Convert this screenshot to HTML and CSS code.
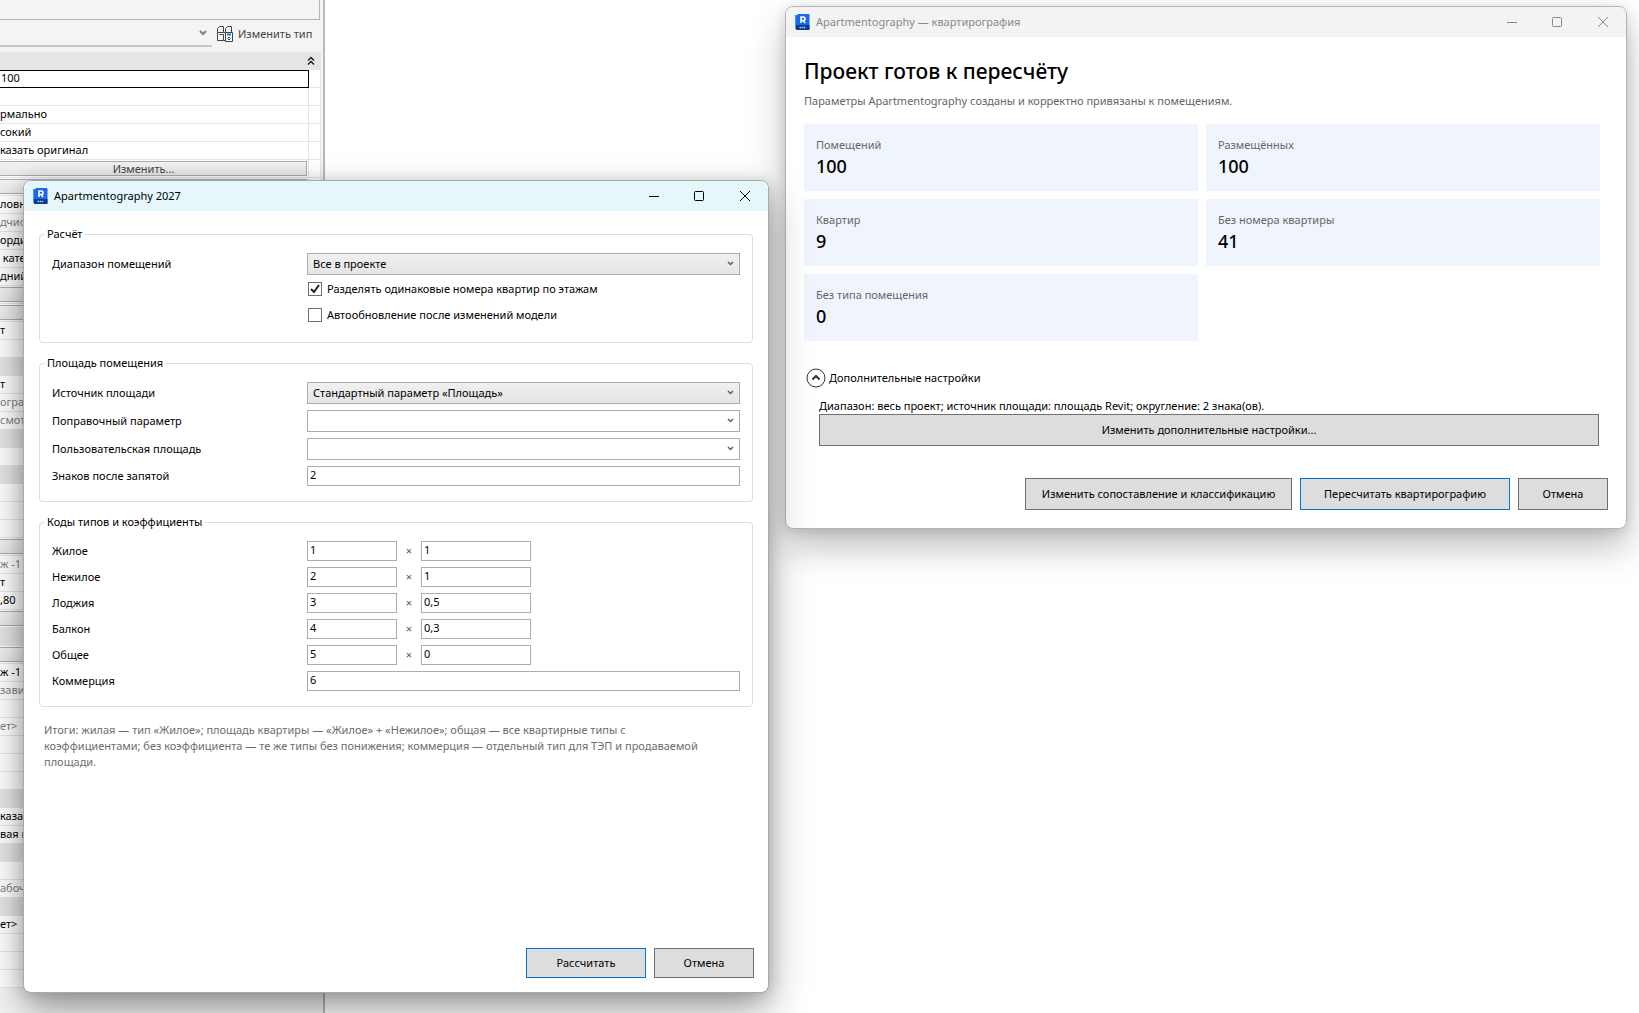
FILE: index.html
```
<!DOCTYPE html>
<html lang="ru">
<head>
    <meta charset="utf-8">
    <meta name="viewport" content="width=device-width, initial-scale=1">
    <title>Apartmentography 2027</title>
    <link rel="stylesheet" href="styles.css">
</head>
<body>
    <svg class="sprite" width="0" height="0" aria-hidden="true">
        <symbol id="logo" viewBox="0 0 16 16">
            <path d="M1 1h3v14H1z" fill="#5b8fe8"/>
            <path d="M2 2.500 4 0h10.500a1 1 0 0 1 1 1v14a1 1 0 0 1-1 1H3a1 1 0 0 1-1-1z" fill="#1668f5"/>
            <path d="M2 11h13.500v4a1 1 0 0 1-1 1H3a1 1 0 0 1-1-1z" fill="#0a3a8c"/>
            <path d="M7 9V3h2.300a1.700 1.700 0 0 1 0 3.500H7M9.300 6.500 11 9" fill="none" stroke="#fff" stroke-width="1.600"/>
            <path d="M5.500 13.500h6" stroke="#a9c3ee" stroke-width="1.600" stroke-dasharray="1.600 .5"/>
        </symbol>
        <symbol id="min" viewBox="0 0 12 12"><path d="M2 6.500h10" stroke="currentColor"/></symbol>
        <symbol id="max" viewBox="0 0 12 12"><rect x="1.500" y="1.500" width="9" height="9" rx="1" fill="none" stroke="currentColor"/></symbol>
        <symbol id="close" viewBox="0 0 12 12"><path d="M1 1l10 10M11 1L1 11" stroke="currentColor"/></symbol>
    </svg>

    <!-- палитра свойств -->
    <aside class="palette">
        <div class="preview"></div>
        <div class="type-row">
            <div class="type-select">
                <svg width="8" height="6" viewBox="0 0 8 6"><path d="M1 1l3 3 3-3" fill="none" stroke="#808080" stroke-width="2"/></svg>
            </div>
            <button class="type-btn">
                <svg width="16" height="16" viewBox="0 0 16 16" fill="none" stroke="#3c4450">
                    <path d="M.5 2.500l2-2h4v6h-6zM8.500 6V2.500l2-2h4v6M.5 6.500v8h6v-6M6.500 6.500h2M2.500 8.500h4M6.500 14.500h2"/>
                    <path d="M8.500 6.500h7v9h-7z" fill="#fff"/>
                    <path d="M10 8.500h4" stroke="#1a6fc4" stroke-width="2"/>
                    <path d="M10.500 12.500l1.500-1.500 1.500 1.500-1.500 1.500z"/>
                </svg>
                Изменить тип
            </button>
        </div>
        <table class="props">
            <colgroup><col><col class="col-link"></colgroup>
            <tr class="head"><td colspan="2"><svg width="8" height="10" viewBox="0 0 8 10"><path d="M1 4.500l3-3 3 3M1 8.500l3-3 3 3" fill="none" stroke="#222" stroke-width="1.500"/></svg></td></tr>
            <tr><td class="cell-input"><input type="text" class="prop-input" value="100" aria-label="Масштаб"></td><td></td></tr>
            <tr><td></td><td></td></tr>
            <tr><td>рмально</td><td></td></tr>
            <tr><td>сокий</td><td></td></tr>
            <tr><td>казать оригинал</td><td></td></tr>
            <tr><td class="cell-btn"><button class="prop-btn">Изменить...</button></td><td></td></tr>
            <tr><td class="cell-btn"><button class="prop-btn" aria-label="Изменить"></button></td><td></td></tr>
            <tr><td>ловны</td><td></td></tr>
            <tr class="off"><td>дчист</td><td></td></tr>
            <tr><td>орди</td><td></td></tr>
            <tr><td>&nbsp;кате</td><td></td></tr>
            <tr><td>дний</td><td></td></tr>
            <tr><td class="cell-btn"><button class="prop-btn" aria-label="Изменить"></button></td><td></td></tr>
            <tr><td class="cell-btn"><button class="prop-btn" aria-label="Изменить"></button></td><td></td></tr>
            <tr><td>т</td><td></td></tr>
            <tr><td></td><td></td></tr>
            <tr class="head"><td colspan="2"></td></tr>
            <tr><td>т</td><td></td></tr>
            <tr class="off"><td>ограм</td><td></td></tr>
            <tr class="off"><td>смот</td><td></td></tr>
            <tr class="head"><td colspan="2"></td></tr>
            <tr><td></td><td></td></tr>
            <tr class="head"><td colspan="2"></td></tr>
            <tr><td></td><td></td></tr>
            <tr><td></td><td></td></tr>
            <tr><td></td><td></td></tr>
            <tr><td class="cell-btn"><button class="prop-btn" aria-label="Изменить"></button></td><td></td></tr>
            <tr class="off"><td>ж -1</td><td></td></tr>
            <tr><td>т</td><td></td></tr>
            <tr><td>,80</td><td></td></tr>
            <tr><td class="cell-btn"><button class="prop-btn" aria-label="Изменить"></button></td><td></td></tr>
            <tr class="head"><td colspan="2"></td></tr>
            <tr><td class="cell-btn"><button class="prop-btn" aria-label="Изменить"></button></td><td></td></tr>
            <tr><td>ж -1</td><td></td></tr>
            <tr class="off"><td>завис</td><td></td></tr>
            <tr><td></td><td></td></tr>
            <tr class="off"><td>ет&gt;</td><td></td></tr>
            <tr><td></td><td></td></tr>
            <tr><td></td><td></td></tr>
            <tr><td></td><td></td></tr>
            <tr class="head"><td colspan="2"></td></tr>
            <tr><td>казат</td><td></td></tr>
            <tr><td>вая к</td><td></td></tr>
            <tr class="head"><td colspan="2"></td></tr>
            <tr><td></td><td></td></tr>
            <tr class="off"><td>абоч</td><td></td></tr>
            <tr class="head"><td colspan="2"></td></tr>
            <tr><td>ет&gt;</td><td></td></tr>
            <tr><td></td><td></td></tr>
            <tr><td></td><td></td></tr>
            <tr><td></td><td></td></tr>
        </table>
    </aside>

    <!-- окно пересчёта -->
    <section class="window window-project">
        <header class="titlebar">
            <svg class="logo"><use href="#logo"/></svg>
            <span class="caption">Apartmentography — квартирография</span>
            <button class="win-btn" aria-label="Свернуть"><svg><use href="#min"/></svg></button>
            <button class="win-btn" aria-label="Развернуть"><svg><use href="#max"/></svg></button>
            <button class="win-btn" aria-label="Закрыть"><svg><use href="#close"/></svg></button>
        </header>
        <div class="project">
            <div class="project-content">
                <h1>Проект готов к пересчёту</h1>
                <p class="subtitle">Параметры Apartmentography созданы и корректно привязаны к помещениям.</p>
                <div class="cards">
                    <div class="card">Помещений<b>100</b></div>
                    <div class="card">Размещённых<b>100</b></div>
                    <div class="card">Квартир<b>9</b></div>
                    <div class="card">Без номера квартиры<b>41</b></div>
                    <div class="card">Без типа помещения<b>0</b></div>
                </div>
                <details class="extra" open>
                    <summary>
                        <svg width="20" height="20" viewBox="0 0 20 20" fill="none" stroke="#333">
                            <circle cx="10" cy="10" r="9"/>
                            <path d="M6.500 11.500L10 8l3.500 3.500" stroke-width="2"/>
                        </svg>
                        Дополнительные настройки
                    </summary>
                    <div class="extra-body">
                        <p>Диапазон: весь проект; источник площади: площадь Revit; округление: 2 знака(ов).</p>
                        <button class="btn btn-wide">Изменить дополнительные настройки...</button>
                    </div>
                </details>
            </div>
            <div class="actions">
                <button class="btn btn-map">Изменить сопоставление и классификацию</button>
                <button class="btn btn-recalc btn-default">Пересчитать квартирографию</button>
                <button class="btn btn-small">Отмена</button>
            </div>
        </div>
    </section>

    <!-- окно настроек расчёта -->
    <form class="window window-settings">
        <header class="titlebar">
            <svg class="logo"><use href="#logo"/></svg>
            <span class="caption">Apartmentography 2027</span>
            <button type="button" class="win-btn" aria-label="Свернуть"><svg><use href="#min"/></svg></button>
            <button type="button" class="win-btn" aria-label="Развернуть"><svg><use href="#max"/></svg></button>
            <button type="button" class="win-btn" aria-label="Закрыть"><svg><use href="#close"/></svg></button>
        </header>
        <div class="settings">
            <div class="groups">
                <fieldset>
                    <legend>Расчёт</legend>
                    <div class="field">
                        <label for="range">Диапазон помещений</label>
                        <div class="combo">
                            <select id="range" class="filled"><option>Все в проекте</option></select>
                            <svg class="arrow"><path d="M1 1l2.500 2.500L6 1"/></svg>
                        </div>
                    </div>
                    <div class="checks">
                        <label class="check"><input type="checkbox" checked>Разделять одинаковые номера квартир по этажам</label>
                        <label class="check"><input type="checkbox">Автообновление после изменений модели</label>
                    </div>
                </fieldset>
                <fieldset>
                    <legend>Площадь помещения</legend>
                    <div class="field">
                        <label for="source">Источник площади</label>
                        <div class="combo">
                            <select id="source" class="filled"><option>Стандартный параметр «Площадь»</option></select>
                            <svg class="arrow"><path d="M1 1l2.500 2.500L6 1"/></svg>
                        </div>
                    </div>
                    <div class="field">
                        <label for="fix">Поправочный параметр</label>
                        <div class="combo">
                            <select id="fix"><option></option></select>
                            <svg class="arrow"><path d="M1 1l2.500 2.500L6 1"/></svg>
                        </div>
                    </div>
                    <div class="field">
                        <label for="custom">Пользовательская площадь</label>
                        <div class="combo">
                            <select id="custom"><option></option></select>
                            <svg class="arrow"><path d="M1 1l2.500 2.500L6 1"/></svg>
                        </div>
                    </div>
                    <div class="field">
                        <label for="digits">Знаков после запятой</label>
                        <input type="text" id="digits" value="2">
                    </div>
                </fieldset>
                <fieldset>
                    <legend>Коды типов и коэффициенты</legend>
                    <div class="field">
                        <label for="code1">Жилое</label>
                        <div class="pair"><input type="text" id="code1" class="code" value="1"><span>×</span><input type="text" class="factor" value="1" aria-label="Коэффициент: жилое"></div>
                    </div>
                    <div class="field">
                        <label for="code2">Нежилое</label>
                        <div class="pair"><input type="text" id="code2" class="code" value="2"><span>×</span><input type="text" class="factor" value="1" aria-label="Коэффициент: нежилое"></div>
                    </div>
                    <div class="field">
                        <label for="code3">Лоджия</label>
                        <div class="pair"><input type="text" id="code3" class="code" value="3"><span>×</span><input type="text" class="factor" value="0,5" aria-label="Коэффициент: лоджия"></div>
                    </div>
                    <div class="field">
                        <label for="code4">Балкон</label>
                        <div class="pair"><input type="text" id="code4" class="code" value="4"><span>×</span><input type="text" class="factor" value="0,3" aria-label="Коэффициент: балкон"></div>
                    </div>
                    <div class="field">
                        <label for="code5">Общее</label>
                        <div class="pair"><input type="text" id="code5" class="code" value="5"><span>×</span><input type="text" class="factor" value="0" aria-label="Коэффициент: общее"></div>
                    </div>
                    <div class="field">
                        <label for="code6">Коммерция</label>
                        <input type="text" id="code6" value="6">
                    </div>
                </fieldset>
                <p class="note">Итоги: жилая — тип «Жилое»; площадь квартиры — «Жилое» + «Нежилое»; общая — все квартирные типы с коэффициентами; без коэффициента — те же типы без понижения; коммерция — отдельный тип для ТЭП и продаваемой площади.</p>
            </div>
            <div class="actions">
                <button type="button" class="btn btn-calc btn-default">Рассчитать</button>
                <button type="button" class="btn btn-cancel">Отмена</button>
            </div>
        </div>
    </form>
</body>
</html>
```
FILE: styles.css
```
* {
    box-sizing: border-box;
}
body {
    margin: 0;
    height: 100vh;
    overflow: hidden;
    position: relative;
    background: #fff;
    color: #000;
    font-family: "Segoe UI", "Noto Sans", sans-serif;
    font-size: 11px;
    line-height: 16px;
}
button, input, select {
    font: inherit;
    color: inherit;
    margin: 0;
}
h1, p {
    margin: 0;
}
.sprite {
    position: absolute;
}

/* палитра свойств */
.palette {
    width: 325px;
    height: 100%;
    overflow: hidden;
    background: #f4f4f4;
    border-right: 2px solid #b9b9b9;
}
.preview {
    height: 20px;
    margin-right: 3px;
    border: solid #b4b4b4;
    border-width: 0 1px 1px 0;
}
.type-row {
    display: flex;
    align-items: flex-start;
    height: 32px;
}
.type-select {
    display: flex;
    align-items: center;
    justify-content: flex-end;
    width: 212px;
    height: 27px;
    padding-right: 5px;
    border-bottom: 2px solid #c8c8c8;
}
.type-btn {
    display: flex;
    align-items: center;
    gap: 5px;
    height: 28px;
    padding: 0 0 0 5px;
    border: 0;
    background: none;
    color: #444;
    white-space: nowrap;
}
/* левая часть таблицы уходит за край экрана */
.props {
    width: 341px;
    margin-left: -20px;
    table-layout: fixed;
    border-collapse: separate;
    border-spacing: 0;
    background: #fff;
}
.col-link {
    width: 12px;
}
.props td {
    height: 18px;
    padding: 0 0 2px 20px;
    border-right: 1px solid #e6e6e6;
    border-bottom: 1px solid #e6e6e6;
    line-height: 15px;
    white-space: nowrap;
    overflow: hidden;
}
.props td + td {
    padding: 0;
}
.props .head td {
    padding: 0 5px 0 0;
    background: #e5e5e5;
}
.props .head td svg {
    display: block;
    margin-left: auto;
}
.props .off {
    color: #808080;
}
.props .cell-input {
    padding: 0;
    border: 0;
}
.props .cell-btn {
    padding: 0 1px 0 0;
}
.prop-input {
    display: block;
    width: 100%;
    height: 18px;
    padding: 0 0 3px 20px;
    border: 1px solid #000;
    background: #fff;
}
.prop-btn {
    display: block;
    width: 100%;
    height: 15px;
    padding: 0;
    border: 1px solid #adadad;
    background: linear-gradient(#f2f2f2, #e8e8e8);
    color: #444;
    line-height: 12px;
}

/* окна */
.window {
    position: absolute;
    display: flex;
    flex-direction: column;
    border: 1px solid #a9a9a9;
    border-radius: 8px;
    background: #fff;
}
.window-project {
    top: 6px;
    left: 785px;
    right: 12px;
    border-color: #b4b4b4;
    box-shadow: 0 18px 36px rgba(0, 0, 0, .26), 0 2px 12px rgba(0, 0, 0, .12);
}
.window-settings {
    top: 180px;
    bottom: 20px;
    left: 23px;
    width: 746px;
    box-shadow: 0 18px 40px rgba(0, 0, 0, .36), 0 2px 16px rgba(0, 0, 0, .18);
}
.titlebar {
    display: flex;
    flex: none;
    align-items: center;
    height: 30px;
    padding-left: 8px;
    border-radius: 7px 7px 0 0;
    background: #e5f7fa;
}
.window-project .titlebar {
    background: #f3f3f3;
    color: #8a8a8a;
}
.logo {
    width: 16px;
    height: 16px;
    margin-right: 6px;
}
.caption {
    flex: 1;
}
.win-btn {
    display: flex;
    align-items: center;
    justify-content: center;
    width: 46px;
    height: 28px;
    padding: 0;
    border: 0;
    background: none;
}
.win-btn svg {
    width: 12px;
    height: 12px;
}
.actions {
    display: flex;
    justify-content: flex-end;
    gap: 8px;
}
.btn {
    height: 32px;
    padding: 0;
    border: 1px solid #707070;
    background: #ddd;
}
.btn-default {
    border-color: #0078d7;
}

/* окно пересчёта */
.project {
    padding: 18px;
}
.project-content {
    padding-right: 8px;
}
h1 {
    font-size: 21px;
    font-weight: 500;
    line-height: 32px;
}
.subtitle {
    margin: 6px 0 15px;
    color: #666;
}
.cards {
    display: grid;
    grid-template-columns: 1fr 1fr;
    gap: 8px;
}
.card {
    height: 67px;
    padding: 13px 12px 0;
    background: #f0f5fd;
    color: #666;
}
.card b {
    display: block;
    color: #000;
    font-size: 18px;
    font-weight: 500;
    line-height: 27px;
}
.extra {
    margin: 27px 0 32px;
}
.extra summary {
    display: flex;
    align-items: center;
    gap: 3px;
    height: 20px;
    padding-left: 2px;
}
.extra-body {
    padding: 10px 1px 0 15px;
}
.btn-wide {
    display: block;
    width: 100%;
}
.btn-map {
    width: 267px;
}
.btn-recalc {
    width: 210px;
}
.btn-small {
    width: 90px;
}

/* окно настроек */
.settings {
    display: flex;
    flex: 1;
    flex-direction: column;
    justify-content: space-between;
    padding: 15px 14px 14px 15px;
}
.groups {
    padding-right: 1px;
}
fieldset {
    margin: 0 0 12px;
    padding: 11px 12px 15px;
    border: 1px solid #d5dfe5;
    border-radius: 4px;
}
legend {
    margin-left: -7px;
    padding: 0 3px 0 2px;
}
.field {
    display: grid;
    grid-template-columns: 255px 1fr;
    align-items: center;
}
.field + .field {
    margin-top: 6px;
}
.combo {
    position: relative;
}
.combo select {
    display: block;
    width: 100%;
    height: 22px;
    padding: 0 5px;
    border: 1px solid #acacac;
    border-radius: 0;
    background: #fff;
    appearance: none;
}
.combo .filled {
    background: linear-gradient(#f0f0f0, #e5e5e5);
}
.arrow {
    position: absolute;
    top: 8px;
    right: 6px;
    width: 7px;
    height: 5px;
    fill: none;
    stroke: #606060;
    stroke-width: 1.5;
    pointer-events: none;
}
.field input {
    width: 100%;
    height: 20px;
    padding: 0 2px 3px;
    border: 1px solid #abadb3;
    background: #fff;
}
.pair {
    display: flex;
    align-items: center;
}
.pair span {
    width: 24px;
    text-align: center;
    color: #555;
}
.pair .code {
    width: 90px;
}
.pair .factor {
    width: 110px;
}
.checks {
    display: flex;
    flex-direction: column;
    align-items: flex-start;
    gap: 10px;
    padding: 6px 0 4px 256px;
}
.check {
    display: flex;
    align-items: center;
    gap: 5px;
}
.check input {
    appearance: none;
    width: 14px;
    height: 14px;
    border: 1px solid #707070;
    background: #fff;
}
.check input:checked {
    background: #fff url("data:image/svg+xml,%3Csvg xmlns='http://www.w3.org/2000/svg' viewBox='0 0 12 12'%3E%3Cpath d='M2 6l3 3 5-7' fill='none' stroke='%23212121' stroke-width='2'/%3E%3C/svg%3E");
}
.note {
    margin-top: 15px;
    padding: 0 40px 0 5px;
    color: #6d6d6d;
}
.settings .btn {
    height: 30px;
}
.btn-calc {
    width: 120px;
}
.btn-cancel {
    width: 100px;
}
```
